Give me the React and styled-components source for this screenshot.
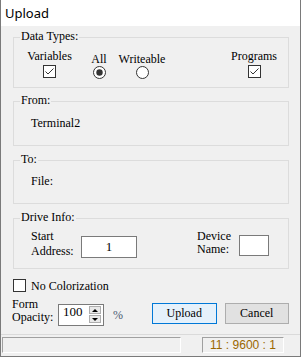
import React from "react";
import styled, { createGlobalStyle } from "styled-components";

const SERIF = `"Liberation Serif", "Times New Roman", serif`;

const GlobalStyle = createGlobalStyle`
  html, body {
    margin: 0;
    padding: 0;
    background: #ffffff;
  }
  body {
    font-family: ${SERIF};
    font-size: 12px;
    color: #000;
  }
`;

const Window = styled.div`
  width: 301px;
  height: 357px;
  box-sizing: border-box;
  border: 1px solid #7a7a7a;
  border-top: none;
  background: #f0f0f0;
  display: flex;
  flex-direction: column;
  font-family: ${SERIF};
`;

const TitleBar = styled.div`
  height: 26px;
  flex-shrink: 0;
  background: #ffffff;
  display: flex;
  align-items: center;
  padding-left: 4px;
  font-family: "Noto Sans", "Liberation Sans", sans-serif;
  font-size: 13px;
  color: #000;
`;

const Body = styled.div`
  flex: 1;
  display: flex;
  flex-direction: column;
  padding: 11px 11px 0 12px;
`;

const Group = styled.div`
  position: relative;
  height: ${p => p.h}px;
  box-sizing: border-box;
  border: 1px solid #dcdcdc;
  margin-top: ${p => p.mt || 0}px;
  padding: ${p => p.pad};
`;

const Legend = styled.span`
  position: absolute;
  top: -9px;
  left: 6px;
  padding: 0 1px;
  line-height: 14px;
  background: #f0f0f0;
`;

const TypeGrid = styled.div`
  display: grid;
  grid-template-columns: 59px 40px 46px 1fr 60px;
`;

const TypeCol = styled.div`
  display: flex;
  flex-direction: column;
  align-items: center;
  padding-top: ${p => (p.low ? 3 : 0)}px;
  gap: ${p => (p.low ? 0 : 2)}px;
  line-height: 14px;
`;

const Box = styled.span`
  width: 13px;
  height: 13px;
  box-sizing: border-box;
  border: 1px solid #333;
  background: #fff;
  display: inline-flex;
  flex-shrink: 0;
`;

const Text = styled.div`
  line-height: 14px;
  white-space: nowrap;
  margin-left: ${p => p.ml || 0}px;
`;

const Row = styled.div`
  display: flex;
  align-items: flex-start;
  margin-top: ${p => p.mt || 0}px;
`;

const Label = styled.div`
  width: ${p => p.w}px;
  line-height: ${p => p.lh}px;
  margin-top: ${p => p.mt || 0}px;
  margin-left: ${p => p.ml || 0}px;
  flex-shrink: 0;
`;

const Field = styled.div`
  width: ${p => p.w}px;
  height: ${p => p.h}px;
  margin-top: ${p => p.mt || 0}px;
  box-sizing: border-box;
  border: 1px solid #7a7a7a;
  background: #fff;
  display: flex;
  justify-content: ${p => (p.center ? "center" : "flex-start")};
  align-items: ${p => (p.center ? "center" : "flex-start")};
  padding-left: ${p => (p.center ? 0 : 4)}px;
  line-height: 14px;
  flex-shrink: 0;
  position: relative;
  font-size: 13px;
`;

const Spin = styled.div`
  position: absolute;
  right: 2px;
  top: 1px;
  display: flex;
  flex-direction: column;
  gap: 1px;
`;

const SpinButton = styled.span`
  width: 12px;
  height: 8px;
  box-sizing: border-box;
  border: 1px solid #adadad;
  background: #e9e9e9;
  display: flex;
  align-items: center;
  justify-content: center;
  &::after {
    content: "";
    border-left: 3px solid transparent;
    border-right: 3px solid transparent;
    ${p =>
      p.down
        ? "border-top: 3px solid #000;"
        : "border-bottom: 3px solid #000;"}
  }
`;

const Percent = styled.span`
  margin-left: 9px;
  margin-top: 9px;
  line-height: 14px;
  color: #4a5a70;
`;

const Button = styled.button`
  width: 65px;
  height: 21px;
  margin-top: 4px;
  margin-left: ${p => p.ml || 0}px;
  padding: 0;
  box-sizing: border-box;
  font-family: ${SERIF};
  font-size: 12px;
  color: #000;
  border: 1px solid ${p => (p.primary ? "#0078d7" : "#adadad")};
  background: ${p => (p.primary ? "#e5f1fb" : "#e1e1e1")};
`;

const StatusBar = styled.div`
  height: 22px;
  flex-shrink: 0;
  box-sizing: border-box;
  border-top: 1px solid #dadada;
  display: flex;
  align-items: flex-start;
  padding: 2px 0 0 1px;
`;

const StatusPanel = styled.div`
  width: ${p => p.w}px;
  height: 16px;
  margin-left: ${p => p.ml || 0}px;
  box-sizing: border-box;
  border-top: 1px solid #a0a0a0;
  border-left: 1px solid #a0a0a0;
  border-bottom: 1px solid #ffffff;
  border-right: 1px solid #ffffff;
  display: flex;
  align-items: center;
  justify-content: center;
  font-family: "Liberation Sans", Arial, sans-serif;
  font-size: 12px;
  color: #9a6700;
`;

const Checkbox = ({ checked }) => (
  <Box>
    {checked && (
      <svg width="11" height="11" viewBox="0 0 11 11">
        <path d="M1.5 5.5 L4 8 L9.5 2.5" fill="none" stroke="#333" strokeWidth="1" />
      </svg>
    )}
  </Box>
);

const Radio = ({ checked }) => (
  <svg width="13" height="13" viewBox="0 0 13 13">
    <circle cx="6.5" cy="6.5" r="6" fill="#fff" stroke="#333" strokeWidth="1" />
    {checked && <circle cx="6.5" cy="6.5" r="3.2" fill="#333" />}
  </svg>
);

export default function App() {
  return (
    <>
      <GlobalStyle />
      <Window>
        <TitleBar>Upload</TitleBar>
        <Body>
          <Group h={51} pad="11px 4px 0 6px">
            <Legend>Data Types:</Legend>
            <TypeGrid>
              <TypeCol>
                <Text>Variables</Text>
                <Checkbox checked />
              </TypeCol>
              <TypeCol low>
                <Text>All</Text>
                <Radio checked />
              </TypeCol>
              <TypeCol low>
                <Text>Writeable</Text>
                <Radio />
              </TypeCol>
              <div />
              <TypeCol>
                <Text>Programs</Text>
                <Checkbox checked />
              </TypeCol>
            </TypeGrid>
          </Group>

          <Group h={45} mt={13} pad="14px 0 0 17px">
            <Legend>From:</Legend>
            <Text>Terminal2</Text>
          </Group>

          <Group h={44} mt={14} pad="13px 0 0 17px">
            <Legend>To:</Legend>
            <Text>File:</Text>
          </Group>

          <Group h={51} mt={14} pad="10px 19px 0 17px">
            <Legend>Drive Info:</Legend>
            <Row>
              <Label w={50} lh={15}>
                Start
                <br />
                Address:
              </Label>
              <Field w={56} h={22} mt={7} center>
                1
              </Field>
              <Label w={42} lh={13} mt={1} ml={60}>
                Device
                <br />
                Name:
              </Label>
              <Field w={30} h={21} mt={6} />
            </Row>
          </Group>

          <Row mt={10}>
            <Checkbox />
            <Text ml={5}>No Colorization</Text>
          </Row>

          <Row mt={6}>
            <Label w={46} lh={13} ml={-1} mt={-1}>
              Form
              <br />
              Opacity:
            </Label>
            <Field w={46} h={22} mt={5}>
              100
              <Spin>
                <SpinButton />
                <SpinButton down />
              </Spin>
            </Field>
            <Percent>%</Percent>
            <Button primary ml={29}>Upload</Button>
            <Button ml={8}>Cancel</Button>
          </Row>
        </Body>
        <StatusBar>
          <StatusPanel w={179} />
          <StatusPanel w={82} ml={21}>
            11 : 9600 : 1
          </StatusPanel>
        </StatusBar>
      </Window>
    </>
  );
}
